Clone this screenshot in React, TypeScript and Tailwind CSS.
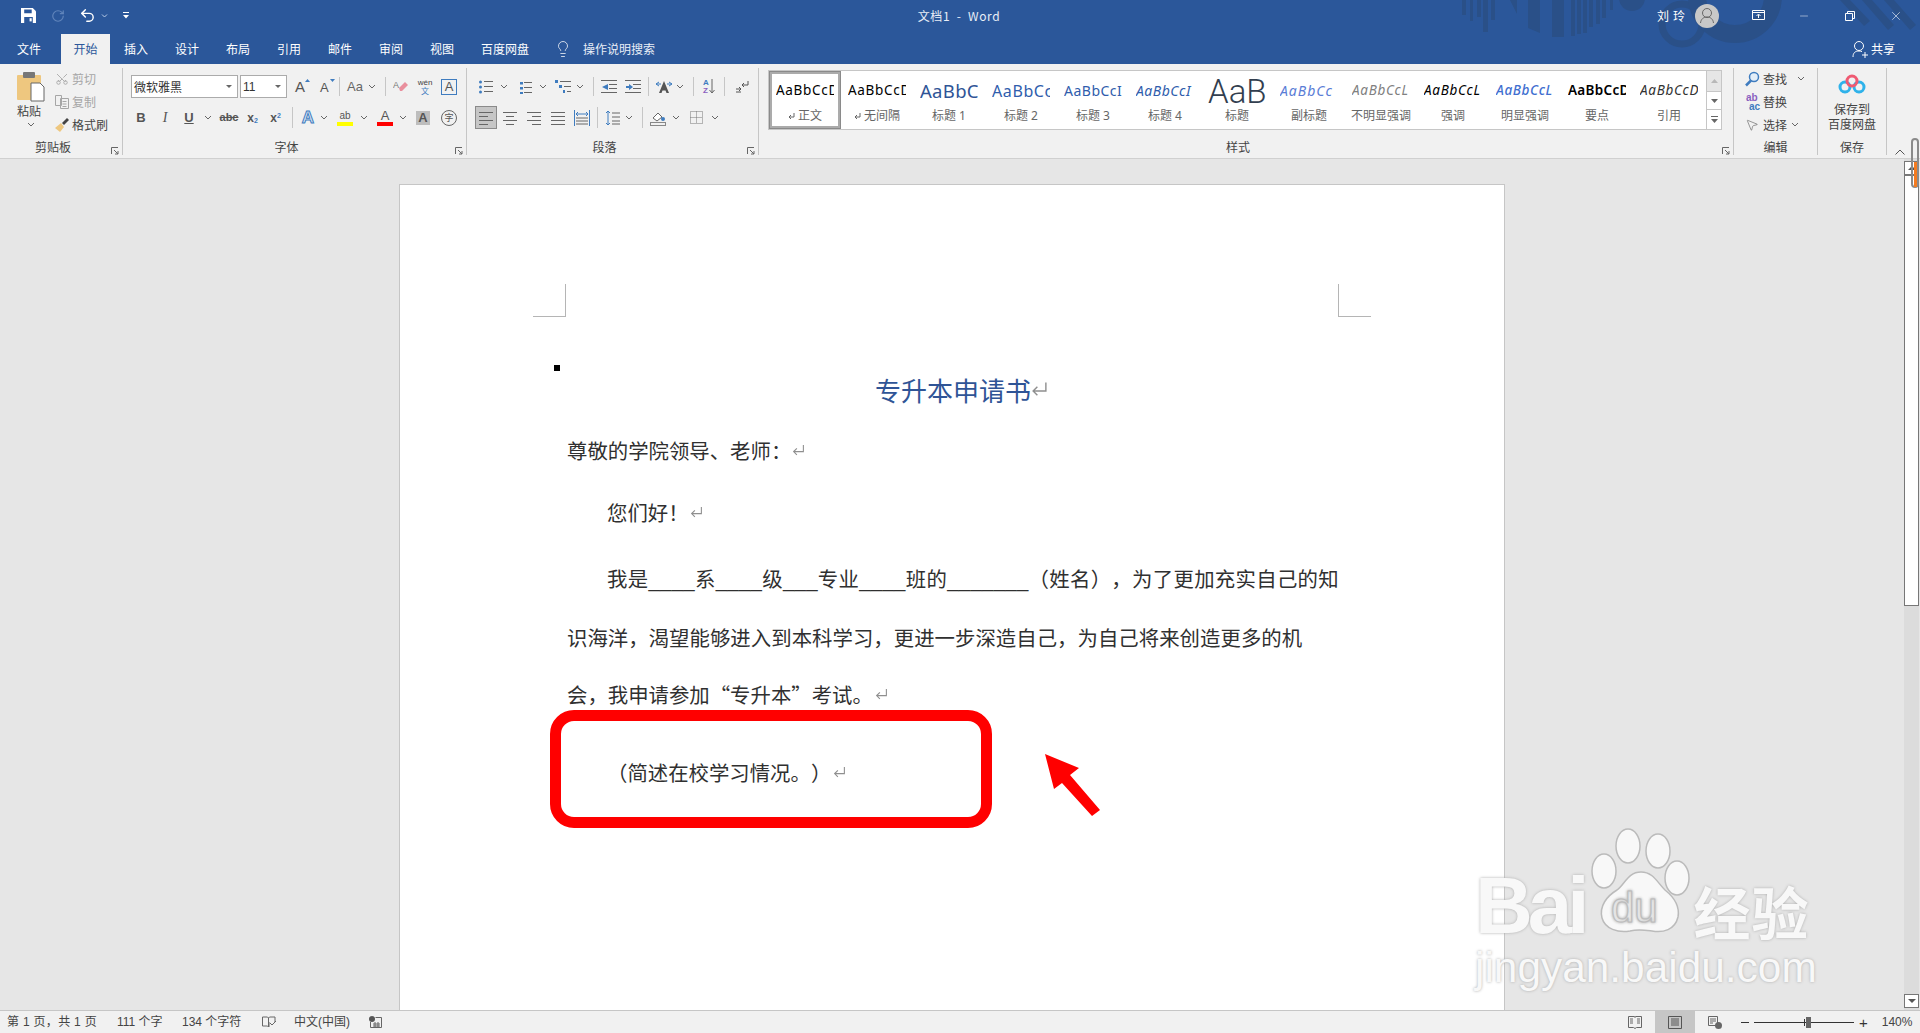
import { Lightbulb, Minus, MousePointer2, RotateCcw, Scissors, Undo2, X } from "lucide-react"

const Chev = ({ className = "" }: { className?: string }) => (
  <svg width="8" height="5" viewBox="0 0 8 5" className={className}>
    <path d="M1 1l3 3 3-3" fill="none" stroke="#666" strokeWidth="1" />
  </svg>
)

const Divider = ({ className = "" }: { className?: string }) => <div className={"w-px bg-[#c6c6c6] " + className} />

const Lines = ({ x = [[0, 14], [0, 14], [0, 14], [0, 14]], color = "#666" }: { x?: number[][]; color?: string }) => (
  <svg width="14" height="14" viewBox="0 0 14 14">
    {x.map((l, i) => (
      <rect key={i} x={l[0]} y={1 + i * 4} width={l[1]} height="1" fill={color} />
    ))}
  </svg>
)

const ListIcon = ({ kind }: { kind: "bullet" | "num" | "multi" }) => (
  <svg width={kind === "multi" ? 17 : 14} height="14" viewBox={kind === "multi" ? "0 0 17 14" : "0 0 14 14"}>
    {kind === "bullet" &&
      [2, 7, 12].map((y) => <circle key={y} cx="1.5" cy={y} r="1.5" fill="#3f7cbf" />)}
    {kind === "bullet" && [1, 6, 11].map((y) => <rect key={y} x="5" y={y} width="9" height="1" fill="#666" />)}
    {kind === "num" &&
      [1, 6, 11].map((y) => <rect key={y} x="2" y={y + 1} width="3" height="2.5" fill="#3f7cbf" />)}
    {kind === "num" && [1, 6, 11].map((y) => <rect key={y} x="6" y={y + 1} width="8" height="1" fill="#666" />)}
    {kind === "multi" && (
      <>
        <rect x="0" y="0" width="3" height="3" fill="#3f7cbf" />
        <rect x="4" y="5" width="3" height="3" fill="#3f7cbf" />
        <rect x="8" y="10" width="2" height="3" fill="#3f7cbf" />
        <rect x="5" y="1" width="11" height="1" fill="#666" />
        <rect x="9" y="6" width="7" height="1" fill="#666" />
        <rect x="12" y="11" width="4" height="1" fill="#666" />
      </>
    )}
  </svg>
)

const IndentIcon = ({ out }: { out?: boolean }) => (
  <svg width="16" height="14" viewBox="0 0 16 14">
    {[0, 4, 8, 12].map((y) => (
      <rect key={y} x={y === 4 || y === 8 ? 8 : 0} y={y} width={y === 4 || y === 8 ? 8 : 16} height="1" fill="#666" />
    ))}
    <path d={out ? "M7 4v6L1 7z" : "M1 6h3V4l4 3-4 3V8H1z"} fill="#3f7cbf" />
  </svg>
)

const ReturnMark = ({ big }: { big?: boolean }) => (
  <svg width={big ? 17 : 13} height={big ? 17 : 13} viewBox="0 0 12 12" className="shrink-0">
    <path d="M10.5 1v6H1.5M4.5 4l-3 3 3 3" fill="none" stroke="#8f8f8f" strokeWidth="1" />
  </svg>
)

const Launcher = () => (
  <svg width="8" height="8" viewBox="0 0 8 8" className="absolute right-[3px] bottom-[3px]">
    <path d="M.5 7V.5H7M3 3l4 4M7 4v3H4" fill="none" stroke="#666" strokeWidth="1" />
  </svg>
)

const GroupLabel = ({ children }: { children: React.ReactNode }) => (
  <div className="relative flex h-[22px] items-center justify-center pr-[16px] text-[12px] text-[#444]">
    {children}
    <Launcher />
  </div>
)

const styleItems = [
  { label: "正文", mark: true, cls: "text-[13.5px] tracking-[0.7px] text-black" },
  { label: "无间隔", mark: true, cls: "text-[13.5px] tracking-[0.7px] text-black" },
  { label: "标题 1", text: "AaBbC", cls: "text-[18.5px] tracking-[0.3px] text-[#2f5496]" },
  { label: "标题 2", text: "AaBbCc", cls: "text-[16px] tracking-[0.6px] text-[#2f5dac]" },
  { label: "标题 3", text: "AaBbCcI", cls: "text-[14px] tracking-[0.5px] text-[#2f5dac]" },
  { label: "标题 4", text: "AaBbCcI", cls: "text-[14px] italic tracking-[0.5px] text-[#2f5dac]" },
  { label: "标题", text: "AaB", cls: "font-['Roboto'] text-[33px] font-light text-[#323e4f]" },
  { label: "副标题", text: "AaBbCc", cls: "text-[14px] italic tracking-[1px] text-[#5a7dd6]" },
  { label: "不明显强调", text: "AaBbCcL", cls: "text-[13.5px] italic tracking-[0.7px] text-[#808080]" },
  { label: "强调", text: "AaBbCcL", cls: "text-[13.5px] italic tracking-[0.7px] text-black" },
  { label: "明显强调", text: "AaBbCcL", cls: "text-[13.5px] italic font-medium tracking-[0.6px] text-[#3f6fd0]" },
  { label: "要点", text: "AaBbCcD", cls: "text-[13.5px] font-semibold tracking-[0.3px] text-black" },
  { label: "引用", text: "AaBbCcD", cls: "text-[13.5px] italic tracking-[0.7px] text-[#333]" },
]

const tabs = ["插入", "设计", "布局", "引用", "邮件", "审阅", "视图"]

const latin = "font-['Liberation_Sans','Noto_Sans_CJK_SC',sans-serif]"

export default function App() {
  return (
    <div className={"relative flex h-screen w-[1920px] flex-col overflow-hidden bg-[#e6e6e6] [text-spacing-trim:space-all] " + latin}>
      {/* title bar and tabs */}
      <header className="relative h-[64px] bg-[#2b579a] font-['Noto_Sans_CJK_SC','Liberation_Sans',sans-serif] text-white">
        <svg width="470" height="64" viewBox="1450 0 470 64" className="absolute right-0 top-0" fill="#2a5088">
          {[
            [1462, 4, 15],
            [1470, 3, 21],
            [1477, 4, 17],
            [1483, 5, 32],
            [1491, 4, 20],
            [1552, 12, 37],
            [1571, 4, 36],
            [1577, 4, 34],
            [1583, 4, 33],
            [1589, 4, 27],
            [1596, 4, 24],
            [1602, 4, 18],
            [1610, 3, 10],
          ].map((b) => (
            <rect key={b[0]} x={b[0]} y="0" width={b[1]} height={b[2]} />
          ))}
          <path d="M1510 0h7v14zM1528 0h12v33l-12-5z" />
          <circle cx="1632" cy="-2" r="13" />
          <circle cx="1682" cy="24" r="20" fill="none" stroke="#2a5088" strokeWidth="7" />
          <circle cx="1735" cy="-4" r="38" fill="none" stroke="#2a5088" strokeWidth="18" />
          <path d="M1840 0l24 26 6-5-20-21zM1862 0l26 30 6-5-22-25zM1884 0l26 30 6-5-22-25z" />
        </svg>
        <div className="relative flex h-[34px] items-center">
          <svg width="15" height="15" viewBox="0 0 14 14" className="ml-[21px] -mt-[3px]">
            <path d="M0 0h11l3 3v11H0z" fill="#fff" />
            <path d="M3 1.5h7v3.5H3zM3 8.5h8V14H3z" fill="#2b579a" />
            <path d="M8 9.5h2v3H8z" fill="#fff" />
          </svg>
          <RotateCcw size={14} strokeWidth={2} className="ml-[15px] -mt-[3px] -scale-x-100 text-[#6185bb]" />
          <Undo2 size={17} strokeWidth={2} className="ml-[14px] -mt-[3px]" />
          <svg width="7" height="4" viewBox="0 0 7 4" className="ml-[5px] -mt-[3px]">
            <path d="M1 .5l2.5 2.5L6 .5" fill="none" stroke="#b9cce6" />
          </svg>
          <svg width="6" height="7" viewBox="0 0 6 7" className="ml-[15px] -mt-[3px]">
            <path d="M0 0h6v1H0zM0 3h6L3 6.5z" fill="#fff" />
          </svg>
          <span className="ml-[785px] -mt-[3px] w-[90px] whitespace-nowrap text-center text-[12px] tracking-[0.6px] text-[#e8eef7]">
            文档1&nbsp; -&nbsp; Word
          </span>
          <span className="ml-[653px] -mt-[3px] text-[12px] tracking-[4px]">刘玲</span>
          <div className="ml-[6px] -mt-[3px] flex h-[24px] w-[24px] items-center justify-center rounded-full bg-[#c8c8c8]">
            <svg width="16" height="17" viewBox="0 0 16 17" fill="none" stroke="#666" strokeWidth="1">
              <circle cx="8" cy="6" r="4.5" />
              <path d="M1.5 16c.5-4 3-6 6.500-6s6 2 6.500 6" />
            </svg>
          </div>
          <svg width="13" height="11" viewBox="0 0 13 11" fill="none" stroke="#fff" className="ml-[33px] -mt-[3px]">
            <path d="M.5.5h12v9H.5zM.5 2.500h12M6.500 8V4.500M4.500 6l2-2 2 2" />
          </svg>
          <Minus size={12} strokeWidth={1} className="ml-[33px] -mt-[3px]" />
          <svg width="10" height="10" viewBox="0 0 10 10" fill="none" stroke="#fff" className="ml-[35px] -mt-[3px]">
            <path d="M.5 2.500h7v7h-7zM2.500 2.500v-2h7v7h-2" />
          </svg>
          <X size={14} strokeWidth={1} className="ml-[34px] -mt-[3px]" />
        </div>
        <div className="relative flex h-[30px] items-center text-[12px]">
          <span className="ml-[17px] w-[44px]">文件</span>
          <span className="flex h-full w-[49px] items-center justify-center bg-[#f1f1f1] text-[#2b579a]">开始</span>
          {tabs.map((t) => (
            <span key={t} className="w-[51px] pl-[14px]">
              {t}
            </span>
          ))}
          <span className="ml-[14px]">百度网盘</span>
          <Lightbulb size={18} strokeWidth={1} className="ml-[25px]" />
          <span className="ml-[11px] text-[#e8eef7]">操作说明搜索</span>
          <svg width="18" height="18" viewBox="0 0 18 18" fill="none" stroke="#fff" className="ml-[1196px]">
            <circle cx="8" cy="6" r="4.500" />
            <path d="M2 17c0-4 2-6 6-6 1 0 2 .2 3 .6M11 15h6M14 12v6" />
          </svg>
          <span className="ml-[2px]">共享</span>
        </div>
      </header>

      {/* ribbon */}
      <section className="flex h-[95px] border-b border-[#d0d0d0] bg-[#f1f1f1] font-['Noto_Sans_CJK_SC','Liberation_Sans',sans-serif] text-[12px] text-[#444]">
        {/* clipboard */}
        <div className="flex h-[94px] w-[122px] flex-col">
          <div className="flex h-[72px]">
            <div className="flex w-[55px] flex-col items-start pl-[17px] pt-[8px]">
              <svg width="28" height="30" viewBox="0 0 28 30">
                <rect x="0" y="3" width="24" height="25" rx="1" fill="#eec77f" />
                <rect x="6" y="0" width="12" height="6" rx="1" fill="#777" />
                <path d="M14 11h9l4 4v14H14z" fill="#fff" stroke="#666" />
              </svg>
              <span className="mt-[2px] leading-[14px]">粘贴</span>
              <Chev className="ml-[10px] mt-[4px]" />
            </div>
            <div className="flex flex-col pt-[3px]">
              <div className="flex h-[23px] items-center gap-[3px] text-[#a6a6a6]">
                <Scissors size={14} strokeWidth={1.5} className="-rotate-90" />
                <span>剪切</span>
              </div>
              <div className="flex h-[23px] items-center gap-[3px] text-[#a6a6a6]">
                <svg width="14" height="14" viewBox="0 0 14 14" fill="none" stroke="#a6a6a6">
                  <path d="M.5.500h6v10h-6zM5.500 3.500h8v10h-8zM7.500 6.500h4M7.500 9h4M7.500 11.500h4" />
                </svg>
                <span>复制</span>
              </div>
              <div className="flex h-[23px] items-center gap-[3px]">
                <svg width="14" height="14" viewBox="0 0 14 14">
                  <path d="M0 10l6-5 3 4-4 5z" fill="#eec77f" />
                  <path d="M7 5l5-5 2 2-5 5z" fill="#444" />
                </svg>
                <span>格式刷</span>
              </div>
            </div>
          </div>
          <GroupLabel>剪贴板</GroupLabel>
        </div>
        <Divider className="mt-[4px] h-[87px]" />

        {/* font */}
        <div className="flex h-[94px] w-[343px] flex-col">
          <div className="h-[72px] pt-[11px]">
            <div className="flex h-[23px] items-center">
              <div className="ml-[8px] flex h-[23px] w-[107px] items-center justify-between border border-[#ababab] bg-white pl-[2px] pr-[5px]">
                <span className="text-[12px] leading-none text-[#333]">微软雅黑</span>
                <svg width="6" height="3" viewBox="0 0 6 3"><path d="M0 0h6L3 3z" fill="#666" /></svg>
              </div>
              <div className="ml-[2px] flex h-[23px] w-[47px] items-center justify-between border border-[#ababab] bg-white pl-[2px] pr-[5px]">
                <span className={"text-[12px] text-[#333] " + latin}>11</span>
                <svg width="6" height="3" viewBox="0 0 6 3"><path d="M0 0h6L3 3z" fill="#666" /></svg>
              </div>
              <span className={"relative ml-[8px] w-[15px] text-[15px] leading-none text-[#555] " + latin}>
                A
                <svg width="5" height="3" viewBox="0 0 5 3" className="absolute right-0 top-0"><path d="M2.500 0L5 3H0z" fill="#3f7cbf" /></svg>
              </span>
              <span className={"relative ml-[10px] w-[15px] pt-[2px] text-[13px] leading-none text-[#555] " + latin}>
                A
                <svg width="5" height="3" viewBox="0 0 5 3" className="absolute right-0 top-0"><path d="M0 0h5L2.500 3z" fill="#3f7cbf" /></svg>
              </span>
              <Divider className="ml-[4px] h-[19px]" />
              <span className={"ml-[7px] w-[15px] text-[13px] leading-none text-[#666] " + latin}>Aa</span>
              <Chev className="ml-[6px]" />
              <Divider className="ml-[9px] h-[19px]" />
              <svg width="16" height="16" viewBox="0 0 16 16" className="ml-[7px]">
                <path d="M6 9l6-6 3 3-6 6H7z" fill="#e98f9d" />
                <text x="0" y="9" fontSize="9" fill="#777" fontFamily="Liberation Sans">A</text>
              </svg>
              <div className="ml-[8px] flex w-[16px] flex-col items-center text-[8px] leading-[8px]">
                <span className={"text-[#444] " + latin}>wén</span>
                <span className="text-[#3f7cbf]">文</span>
              </div>
              <span className={"ml-[8px] flex h-[16px] w-[16px] items-center justify-center border border-[#3f7cbf] text-[13px] text-[#555] " + latin}>
                A
              </span>
            </div>
            <div className={"mt-[8px] flex h-[23px] items-center pl-[6px] text-[#555] " + latin}>
              <span className="w-[24px] text-center text-[13px] font-bold">B</span>
              <span className="w-[24px] text-center font-['Liberation_Serif',serif] text-[14px] italic">I</span>
              <span className="w-[24px] text-center text-[13px] font-bold underline">U</span>
              <Chev className="ml-[3px]" />
              <span className="ml-[5px] w-[24px] text-center text-[11px] font-bold line-through">abc</span>
              <span className="w-[23px] text-center text-[12px] font-bold">
                x<sub className="text-[7px] text-[#3f7cbf]">2</sub>
              </span>
              <span className="w-[23px] text-center text-[12px] font-bold">
                x<sup className="text-[7px] text-[#3f7cbf]">2</sup>
              </span>
              <Divider className="ml-[5px] h-[21px]" />
              <span className="ml-[7px] w-[16px] text-center text-[17px] font-bold leading-none text-[#dbe7f5] [-webkit-text-stroke:1px_#3f7cbf]">A</span>
              <Chev className="ml-[4px]" />
              <div className="ml-[9px] flex w-[16px] flex-col items-center">
                <span className="text-[10px] leading-[12px] text-[#555]">ab</span>
                <div className="h-[4px] w-[16px] bg-[#ffff00]" />
              </div>
              <Chev className="ml-[7px]" />
              <div className="ml-[9px] flex w-[16px] flex-col items-center">
                <span className="text-[13px] leading-[13px] text-[#555]">A</span>
                <div className="h-[4px] w-[16px] bg-[#ff0000]" />
              </div>
              <Chev className="ml-[6px]" />
              <span className="ml-[9px] flex h-[14px] w-[14px] items-center justify-center bg-[#bdbdbd] text-[13px] font-bold text-[#555]">A</span>
              <span className="ml-[11px] flex h-[16px] w-[16px] items-center justify-center rounded-full border border-[#666] font-['Noto_Sans_CJK_SC'] text-[9px] leading-none">字</span>
            </div>
          </div>
          <GroupLabel>字体</GroupLabel>
        </div>
        <Divider className="mt-[4px] h-[87px]" />

        {/* paragraph */}
        <div className="flex h-[94px] w-[291px] flex-col">
          <div className="h-[72px] pt-[11px]">
            <div className="flex h-[23px] items-center pl-[12px]">
              <ListIcon kind="bullet" />
              <Chev className="ml-[7px]" />
              <span className="ml-[10px]"><ListIcon kind="num" /></span>
              <Chev className="ml-[7px]" />
              <span className="ml-[8px]"><ListIcon kind="multi" /></span>
              <Chev className="ml-[4px]" />
              <Divider className="ml-[9px] h-[19px]" />
              <span className="ml-[7px]"><IndentIcon out /></span>
              <span className="ml-[8px]"><IndentIcon /></span>
              <Divider className="ml-[7px] h-[19px]" />
              <svg width="16" height="14" viewBox="0 0 16 14" className="ml-[7px]">
                <path d="M3 2l-3 2 3 2M13 2l3 2-3 2M0 4h5M11 4h5" fill="none" stroke="#3f7cbf" />
                <path d="M8 1L3 13h2.500l1-2.500h3l1 2.500H13z" fill="#555" />
              </svg>
              <Chev className="ml-[4px]" />
              <Divider className="ml-[9px] h-[19px]" />
              <div className={"ml-[9px] flex w-[13px] items-center " + latin}>
                <div className="flex flex-col text-[8px] font-bold leading-[8px]">
                  <span className="text-[#3f7cbf]">A</span>
                  <span className="text-[#8a5fc0]">Z</span>
                </div>
                <svg width="6" height="15" viewBox="0 0 6 15"><path d="M3 0v14M.5 11L3 14l2.500-3" fill="none" stroke="#666" /></svg>
              </div>
              <Divider className="ml-[8px] h-[19px]" />
              <svg width="14" height="14" viewBox="0 0 14 14" fill="none" stroke="#555" className="ml-[10px]">
                <path d="M13 1v4H7M9 3L7 5l2 2M1 9h5M4 7l2 2-2 2M6 12H1" />
              </svg>
            </div>
            <div className="mt-[8px] flex h-[23px] items-center pl-[8px]">
              <div className="flex h-[23px] w-[22px] items-center justify-center border border-[#8a8a8a] bg-[#c6c6c6]">
                <Lines x={[[0, 14], [0, 9], [0, 14], [0, 9]]} />
              </div>
              <span className="ml-[6px]"><Lines x={[[0, 14], [3, 8], [0, 14], [3, 8]]} /></span>
              <span className="ml-[10px]"><Lines x={[[0, 14], [5, 9], [0, 14], [5, 9]]} /></span>
              <span className="ml-[10px]"><Lines /></span>
              <svg width="16" height="16" viewBox="0 0 16 16" className="ml-[9px]">
                <path d="M.5 0v16M15.500 0v16M2 4h12M4 2L2 4l2 2M12 2l2 2-2 2" fill="none" stroke="#3f7cbf" />
                <path d="M2 8h12M2 11h12M2 14h12" stroke="#666" />
              </svg>
              <Divider className="ml-[7px] h-[21px]" />
              <svg width="14" height="16" viewBox="0 0 14 16" className="ml-[8px]">
                <path d="M2 1v14M0 3l2-2 2 2M0 13l2 2 2-2" fill="none" stroke="#3f7cbf" />
                <path d="M6 3h8M6 7h8M6 11h8M6 14h8" stroke="#666" />
              </svg>
              <Chev className="ml-[5px]" />
              <Divider className="ml-[9px] h-[21px]" />
              <svg width="16" height="16" viewBox="0 0 16 16" className="ml-[7px]">
                <path d="M3 8l5-5 4 4-5 4z" fill="#fff" stroke="#666" />
                <circle cx="13" cy="9" r="2" fill="#3f7cbf" />
                <rect x=".5" y="12.500" width="15" height="3" fill="#f1f1f1" stroke="#888" />
              </svg>
              <Chev className="ml-[6px]" />
              <svg width="13" height="13" viewBox="0 0 13 13" fill="none" stroke="#777" strokeDasharray="1 1" className="ml-[10px]">
                <path d="M.5.500h12v12H.5zM6.500.500v12M.5 6.500h12" />
              </svg>
              <Chev className="ml-[8px]" />
            </div>
          </div>
          <GroupLabel>段落</GroupLabel>
        </div>
        <Divider className="mt-[4px] h-[87px]" />

        {/* styles */}
        <div className="flex h-[94px] w-[974px] flex-col">
          <div className="h-[72px] pl-[9px] pt-[6px]">
            <div className="flex h-[60px] w-[954px] border border-[#c6c6c6] bg-white">
              <div className="flex flex-1 font-['Noto_Sans','Noto_Sans_CJK_SC',sans-serif]">
                {styleItems.map((s, i) => (
                  <div
                    key={s.label}
                    className={
                      "flex w-[72px] flex-col items-center " +
                      (i === 0 ? "h-[58px] border-[3px] border-[#ababab] outline outline-[#8a8a8a] -outline-offset-1" : "h-[58px] p-[3px]")
                    }
                  >
                    <div className={"flex h-[34px] w-[58px] items-center overflow-hidden whitespace-nowrap leading-none " + s.cls}>
                      {s.text ?? "AaBbCcD"}
                    </div>
                    <div className="flex h-[16px] items-center gap-[3px] whitespace-nowrap text-[12px] text-[#666]">
                      {s.mark && <svg width="7" height="7" viewBox="0 0 7 7"><path d="M6 0v4H1M3 2L1 4l2 2" fill="none" stroke="#666" /></svg>}
                      {s.label}
                    </div>
                  </div>
                ))}
              </div>
              <div className="flex w-[15px] flex-col border-l border-[#c6c6c6]">
                <div className="flex h-[20px] items-center justify-center bg-[#e6e6e6]">
                  <svg width="7" height="4" viewBox="0 0 7 4"><path d="M3.500 0L7 4H0z" fill="#b8b8b8" /></svg>
                </div>
                <div className="flex h-[19px] items-center justify-center border-y border-[#c6c6c6]">
                  <svg width="7" height="4" viewBox="0 0 7 4"><path d="M0 0h7L3.500 4z" fill="#666" /></svg>
                </div>
                <div className="flex h-[19px] items-center justify-center">
                  <svg width="7" height="7" viewBox="0 0 7 7"><path d="M0 0h7v1H0zM0 3h7L3.500 7z" fill="#666" /></svg>
                </div>
              </div>
            </div>
          </div>
          <GroupLabel>样式</GroupLabel>
        </div>
        <Divider className="mt-[4px] h-[87px]" />

        {/* editing */}
        <div className="flex h-[94px] w-[83px] flex-col">
          <div className="h-[72px] pl-[10px] pt-[3px]">
            <div className="flex h-[23px] items-center">
              <svg width="16" height="16" viewBox="0 0 16 16" fill="none">
                <circle cx="10" cy="6" r="4.500" stroke="#3f7cbf" strokeWidth="1.500" fill="#e4eef8" />
                <path d="M7 9.500L2 14.500" stroke="#3f7cbf" strokeWidth="2.500" />
              </svg>
              <span className="ml-[3px]">查找</span>
              <Chev className="ml-[10px]" />
            </div>
            <div className="flex h-[23px] items-center">
              <div className={"flex w-[16px] flex-col text-[10px] font-bold leading-[9px] " + latin}>
                <span className="pl-[2px] text-[#8a5fc0]">ab</span>
                <span className="text-right text-[#3f7cbf]">ac</span>
              </div>
              <span className="ml-[3px]">替换</span>
            </div>
            <div className="flex h-[23px] items-center">
              <MousePointer2 size={14} strokeWidth={1} className="ml-[1px] mr-[1px] text-[#555]" />
              <span className="ml-[3px]">选择</span>
              <Chev className="ml-[4px]" />
            </div>
          </div>
          <div className="flex h-[22px] items-center justify-center">编辑</div>
        </div>
        <Divider className="mt-[4px] h-[87px]" />

        {/* save */}
        <div className="flex h-[94px] w-[68px] flex-col">
          <div className="flex h-[72px] flex-col items-center pt-[10px] leading-[15px]">
            <svg width="28" height="21" viewBox="0 0 28 21" fill="none" strokeWidth="3">
              <circle cx="7" cy="13" r="5" stroke="#2fb2ea" />
              <circle cx="21" cy="13" r="5" stroke="#2fb2ea" />
              <circle cx="14" cy="7" r="5" stroke="#ef5a72" />
            </svg>
            <span className="mt-[6px]">保存到</span>
            <span>百度网盘</span>
          </div>
          <div className="flex h-[22px] items-center justify-center">保存</div>
        </div>
        <Divider className="mt-[4px] h-[87px]" />
        <div className="flex flex-1 items-end justify-center pb-[3px] pr-[8px]">
          <svg width="10" height="6" viewBox="0 0 10 6"><path d="M.5 5.500L5 1l4.500 4.500" fill="none" stroke="#555" /></svg>
        </div>
      </section>

      {/* document area */}
      <main className="flex min-h-0 flex-1">
        <div className="min-w-0 flex-1 overflow-hidden pl-[399px] pt-[25px]">
          <div className="relative h-[900px] w-[1106px] border border-[#c6c6c6] bg-white font-['Noto_Sans_CJK_SC','Liberation_Sans',sans-serif] text-[20.4px] text-[#303030]">
            <div className="mx-[133px] mt-[99px] flex h-[33px] justify-between">
              <div className="h-[33px] w-[33px] border-b border-r border-[#b5b5b5]" />
              <div className="h-[33px] w-[33px] border-b border-l border-[#b5b5b5]" />
            </div>
            <div className="ml-[154px] mt-[48px] h-[6px] w-[6px] bg-black" />
            <div className="ml-[475px] flex h-[36px] items-center text-[26px] text-[#2f5496]">
              专升本申请书
              <ReturnMark big />
            </div>
            <div className="ml-[167px] mt-[28px] flex h-[30px] items-center gap-[1px]">
              尊敬的学院领导、老师：
              <ReturnMark />
            </div>
            <div className="ml-[207px] mt-[32px] flex h-[30px] items-center gap-[1px]">
              您们好！
              <ReturnMark />
            </div>
            <div className={"ml-[207px] mt-[38px] h-[30px] whitespace-nowrap leading-[30px] tracking-[0.3px] " + latin}>
              我是____系____级___专业____班的_______（姓名），为了更加充实自己的知
            </div>
            <div className="ml-[167px] mt-[27px] h-[30px] whitespace-nowrap leading-[30px] tracking-[0.03px]">
              识海洋，渴望能够进入到本科学习，更进一步深造自己，为自己将来创造更多的机
            </div>
            <div className="ml-[167px] mt-[27px] flex h-[30px] items-center gap-[2px] whitespace-nowrap">
              会，我申请参加“专升本”考试。
              <ReturnMark />
            </div>
            <div className="ml-[207px] mt-[48px] flex h-[30px] items-center gap-[2px] whitespace-nowrap">
              （简述在校学习情况。）
              <ReturnMark />
            </div>

            {/* red annotation */}
            <div className="absolute left-[150px] top-[525px] h-[118px] w-[442px] rounded-[24px] border-[11px] border-[#ff0000]" />
            <svg width="66" height="70" viewBox="1040 750 66 70" className="absolute left-[640px] top-[565px]">
              <path d="M1045 754L1079 768L1070 775L1100 810L1092 816L1062 783L1054 789z" fill="#ff0000" />
            </svg>
          </div>
        </div>

        {/* scrollbar */}
        <div className="mr-px flex w-[15px] flex-col bg-[#dcdcdc] pt-[2px]">
          <div className="h-[445px] border border-[#777] bg-white">
            <div className="flex h-[14px] items-center justify-center border-b-2 border-[#777]">
              <svg width="8" height="4" viewBox="0 0 8 4"><path d="M4 0l4 4H0z" fill="#555" /></svg>
            </div>
          </div>
          <div className="flex-1" />
          <div className="mb-[2px] flex h-[14px] items-center justify-center border border-[#777] bg-white">
            <svg width="8" height="4" viewBox="0 0 8 4"><path d="M0 0h8L4 4z" fill="#555" /></svg>
          </div>
        </div>
      </main>

      {/* status bar */}
      <footer className="flex h-[23px] items-center border-t border-[#c6c6c6] bg-[#f1f1f1] font-['Liberation_Sans','Noto_Sans_CJK_SC',sans-serif] text-[12px] text-[#444]">
        <span className="ml-[7px] w-[110px] tracking-[0.3px]">第 1 页，共 1 页</span>
        <span className="w-[65px]">111 个字</span>
        <span className="w-[80px]">134 个字符</span>
        <svg width="14" height="12" viewBox="0 0 14 12" fill="none" stroke="#666">
          <path d="M.5 1h5l1 1v9l-1-1h-5zM6.500 2l1-1H13v5M7 6v5M8 7l2 2 4-4" />
        </svg>
        <span className="ml-[18px] w-[75px]">中文(中国)</span>
        <svg width="13" height="12" viewBox="0 0 13 12">
          <circle cx="3" cy="3" r="3" fill="#555" />
          <path d="M6.500 1.500h6v10h-11V6M4 8h7M4 10h7M6 6v5M9 6v5" fill="none" stroke="#666" />
        </svg>
        <svg width="14" height="13" viewBox="0 0 14 13" fill="none" stroke="#666" className="ml-[1246px]">
          <path d="M.5.500h6l.5 1 .5-1h6v11h-5l-1.500 1-1.500-1h-5zM2 3h3M2 5h3M2 7h3M9 3h3M9 5h3M9 7h3" />
        </svg>
        <div className="ml-[13px] flex h-full w-[40px] items-center justify-center bg-[#c6c6c6]">
          <svg width="14" height="13" viewBox="0 0 14 13" fill="none" stroke="#555">
            <path d="M.5.500h13v12H.5zM3 3h8M3 5h8M3 7h8M3 9h8" />
          </svg>
        </div>
        <svg width="14" height="13" viewBox="0 0 14 13" className="ml-[13px]">
          <path d="M.5.500h9v9H.5zM2 3h6M2 5h6M2 7h3" fill="none" stroke="#666" />
          <circle cx="10.500" cy="9.500" r="3.500" fill="#666" />
        </svg>
        <div className="ml-[19px] h-px w-[8px] bg-[#333]" />
        <div className="relative ml-[5px] flex h-[11px] w-[100px] items-center">
          <div className="h-px w-full bg-[#333]" />
          <div className="absolute left-[50px] h-[7px] w-px bg-[#333]" />
          <div className="absolute left-[52px] h-[11px] w-[5px] bg-[#666]" />
        </div>
        <span className="ml-[5px] text-[15px] font-light leading-none text-[#333]">+</span>
        <span className="ml-[14px]">140%</span>
      </footer>

      {/* scroll marker on top of the scrollbar */}
      <div className="absolute left-[1911px] top-[138px] h-[50px] w-[8px] rounded-[4px] border-2 border-[#8a8a8a]" />
      <div className="absolute left-[1914px] top-[162px] h-[25px] w-[3px] bg-[#f47b20]" />

      {/* jingyan watermark */}
      <div className="pointer-events-none absolute left-[1475px] top-[826px] h-[170px] w-[345px] text-[#f8f8f8] [text-shadow:0_0_3px_#aaa]">
        <div className="flex h-[112px] items-end">
          <span className="mb-[-8px] text-[80px] font-bold leading-[80px] tracking-[-5px]">Bai</span>
          <svg width="104" height="112" viewBox="0 0 104 112" className="ml-[4px]">
            <g fill="#f8f8f8" stroke="#bbb" strokeWidth="1.500">
              <ellipse cx="39" cy="20" rx="12" ry="17" />
              <ellipse cx="69" cy="25" rx="12" ry="17" />
              <ellipse cx="15" cy="45" rx="12" ry="17" />
              <ellipse cx="88" cy="52" rx="12" ry="17" />
              <path d="M52 46c12 0 16 10 24 18 10 8 15 16 13 27-3 13-15 16-26 14-8-1-14-2-22 0-12 2-25-2-28-13-3-12 5-22 15-28 8-6 11-18 24-18z" />
            </g>
            <text x="22" y="96" fontSize="42" fontFamily="Liberation Sans" fill="#f8f8f8" stroke="#bbb" strokeWidth="1">du</text>
          </svg>
          <span className="mb-[-2px] ml-[1px] whitespace-nowrap font-['Noto_Sans_CJK_SC'] text-[57px] font-bold leading-[60px] tracking-[1px]">经验</span>
        </div>
        <div className="mt-[6px] whitespace-nowrap text-[42.400px] leading-[48px]">jingyan.baidu.com</div>
      </div>
    </div>
  )
}
